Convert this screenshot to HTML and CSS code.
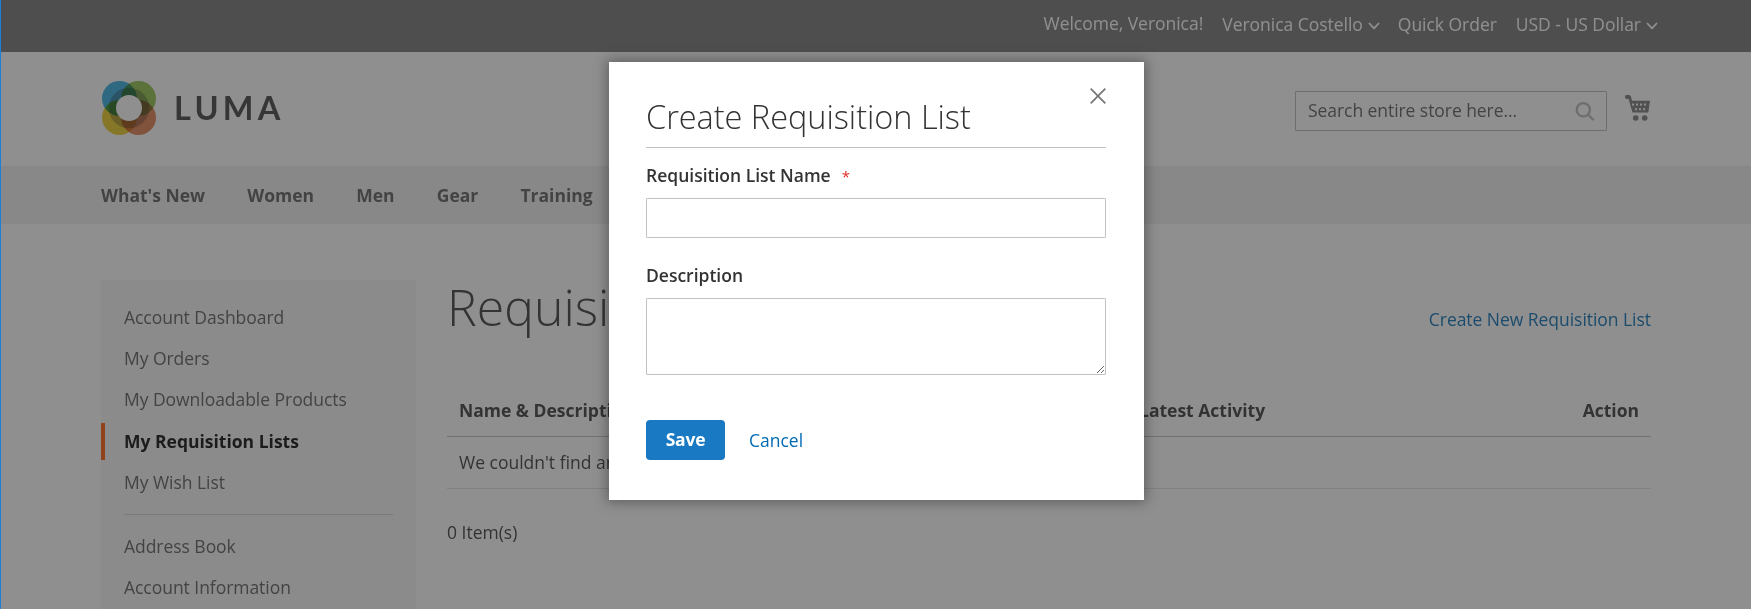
FILE: index.html
```html
<!DOCTYPE html>
<html lang="en">
<head>
<meta charset="utf-8">
<title>Requisition Lists</title>
<link rel="stylesheet" href="styles.css">
</head>
<body>
<div class="page">
  <div class="panel">
    <span class="welcome">Welcome, Veronica!</span>
    <span class="drop customer">Veronica Costello<svg class="chev" viewBox="0 0 12 8"><path d="M1 1l5 5.4L11 1"/></svg></span>
    <span class="quick">Quick Order</span>
    <span class="drop currency">USD - US Dollar<svg class="chev" viewBox="0 0 12 8"><path d="M1 1l5 5.4L11 1"/></svg></span>
  </div>
  <header class="header">
    <div class="logo">
      <svg class="mark" viewBox="0 0 54 54">
        <g class="petals">
          <circle cx="17.5" cy="17.5" r="17.5" fill="#2aabe0"/>
          <circle cx="36.5" cy="17.5" r="17.5" fill="#8cbe43"/>
          <circle cx="17.5" cy="36.5" r="17.5" fill="#ebc91b"/>
          <circle cx="36.5" cy="36.5" r="17.5" fill="#e07a48"/>
          <circle cx="27" cy="27" r="20.3" fill="#bababa"/>
        </g>
        <circle cx="27" cy="27" r="13" fill="#fff"/>
      </svg>
      <span class="word">LUMA</span>
    </div>
    <div class="tools">
      <div class="search"><span>Search entire store here...</span>
        <svg class="lens" viewBox="0 0 20 20"><circle cx="8.300" cy="7.800" r="6.600"/><path d="M13 12.500l5.500 5.500"/></svg>
      </div>
      <svg class="cart" viewBox="0 0 25 26">
        <circle cx="2.1" cy="1.9" r="2.1"/><path d="M1.5 0H4q1.500 0 2 1.500L7 5.800H25L23.300 17.500H7.500L3.400 3.500H1.500z"/>
        <circle cx="10.700" cy="23" r="2.800"/><circle cx="19.700" cy="23" r="2.800"/>
        <path class="dots" d="M7 9.500h16M10 14.300h12"/>
      </svg>
    </div>
  </header>
  <nav class="nav"><a>What's New</a><a>Women</a><a>Men</a><a>Gear</a><a>Training</a></nav>
  <div class="columns">
    <aside class="side">
      <a>Account Dashboard</a>
      <a>My Orders</a>
      <a>My Downloadable Products</a>
      <a class="current">My Requisition Lists</a>
      <a>My Wish List</a>
      <hr>
      <a>Address Book</a>
      <a>Account Information</a>
    </aside>
    <main class="main">
      <div class="title-row"><h1>Requisition Lists</h1><a class="create">Create New Requisition List</a></div>
      <div class="row head"><span>Name &amp; Description</span><span>Latest Activity</span><span class="action">Action</span></div>
      <div class="row"><span class="empty">We couldn't find any requisition lists.</span></div>
      <p class="count">0 Item(s)</p>
    </main>
  </div>
</div>
<div class="overlay">
  <section class="modal">
    <svg class="close" viewBox="0 0 16 16"><path d="M.7.7l14.600 14.600M15.300.7L.7 15.300"/></svg>
    <h2>Create Requisition List</h2>
    <label class="label">Requisition List Name<span class="req">*</span></label>
    <input class="field" type="text">
    <label class="label second">Description</label>
    <textarea class="field area"></textarea>
    <div class="actions"><button class="save">Save</button><a class="cancel">Cancel</a></div>
  </section>
</div>
<div class="edge"></div>
</body>
</html>
```
FILE: styles.css
```css
* { box-sizing: border-box; }
html, body { margin: 0; height: 609px; overflow: hidden; }
body { font-family: "Open Sans", "Noto Sans", sans-serif; font-size: 17.5px; line-height: 24px; color: #333; background: #fff; }
span, a, h1, h2 { white-space: nowrap; }
.page { height: 609px; overflow: hidden; }
.panel { height: 52px; background: #707070; color: #fff; display: flex; justify-content: flex-end; padding: 12px 93px 0 0; letter-spacing: -.03px; }
.welcome { margin: -1px 19px 0 0; }
.drop { display: flex; }
.chev { width: 12px; height: 8px; margin: 10px 0 0 5px; fill: none; stroke: #fff; stroke-width: 1.8; }
.customer { margin-right: 18px; }
.quick { margin-right: 19px; }
.header { height: 114px; padding: 29px 101px 0 102px; display: flex; justify-content: space-between; }
.logo { display: flex; }
.mark { width: 54px; height: 54px; }
.petals circle { mix-blend-mode: multiply; }
.petals { isolation: isolate; }
.word { font: 700 32.5px/54px Lato, sans-serif; letter-spacing: 4.2px; margin-left: 18px; color: #3b3b3b; }
.tools { display: flex; }
.search { width: 312px; height: 40px; margin: 10px 18px 0 0; border: 1px solid #b5b5b5; border-radius: 1px; padding: 6px 11px 6px 12px; display: flex; justify-content: space-between; color: #575757; letter-spacing: -.06px; }
.lens { width: 20px; height: 20px; margin-top: 4px; fill: none; stroke: #b5b5b5; stroke-width: 2.3; }
.cart { width: 25px; height: 26px; margin-top: 14px; fill: #757575; }
.dots { stroke: #fff; stroke-width: 2; stroke-dasharray: 2 2; }
.nav { height: 58px; background: #f0f0f0; padding: 17px 101px 0; display: flex; gap: 42.2px; font-weight: 700; color: #575757; }
.columns { display: flex; padding: 56px 100px 0 101px; gap: 31px; }
.side { width: 315px; height: 340px; background: #f5f5f5; padding: 22px 0 0; display: flex; flex-direction: column; color: #575757; letter-spacing: -.04px; }
.side a { padding: 0 23px; height: 37px; line-height: 31px; margin-bottom: 4px; flex: none; }
.side .current { border-left: 4px solid #ff5501; padding-left: 19px; font-weight: 700; color: #000; line-height: 37px; margin: -2px 0 7px; letter-spacing: 0; }
.side hr { width: 269px; height: 1px; border: 0; background: #d1d1d1; margin: 6px 23px 16px; flex: none; }
.main { flex: 1; }
.title-row { display: flex; justify-content: space-between; height: 112px; }
h1 { margin: 0; font-size: 50px; font-weight: 300; line-height: 55px; }
.create { color: #006bb4; margin-top: 27px; letter-spacing: -.04px; }
.row { display: flex; height: 52px; padding: 13px 12px; border-bottom: 1px solid #e0e0e0; }
.head { height: 45px; padding-top: 6px; font-weight: 700; border-color: #bcbcbc; display: grid; grid-template-columns: 680px 1fr auto; }
.count { margin: 31px 0 0; }
.overlay { position: absolute; inset: 0; background: rgba(51,51,51,.55); }
.modal { position: absolute; left: 609px; top: 62px; width: 535px; height: 438px; background: #fff; box-shadow: 0 0 12px 2px rgba(0,0,0,.35); padding: 35px 38px 0 37px; }
.close { position: absolute; left: 480.5px; top: 26px; width: 16px; height: 16px; stroke: #757575; stroke-width: 1.7; }
h2 { margin: 0 0 15px; height: 51px; border-bottom: 1px solid #c1c1c1; font-size: 32.5px; font-weight: 300; line-height: 40px; letter-spacing: -.03px; }
.label { display: block; font-weight: 600; height: 35px; line-height: 24px; }
.req { color: #e02b27; font-size: 15px; font-weight: 400; margin-left: 11px; }
.field { display: block; width: 460px; height: 40px; margin: 0; border: 1px solid #c2c2c2; border-radius: 1px; background: #fff; padding: 0 11px; }
.second { margin-top: 25px; }
.area { height: 77px; resize: vertical; }
.actions { display: flex; margin-top: 45px; }
.save { width: 79px; height: 40px; border: 0; border-radius: 4px; background: #1979c3; color: #fff; font: 700 17.5px/24px "Open Sans", sans-serif; padding: 0 0 2px; letter-spacing: -.2px; }
.cancel { color: #006bb4; margin: 8px 0 0 24px; }
.edge { position: absolute; left: 0; top: 0; width: 1px; height: 609px; background: #1a80dc; }
```
